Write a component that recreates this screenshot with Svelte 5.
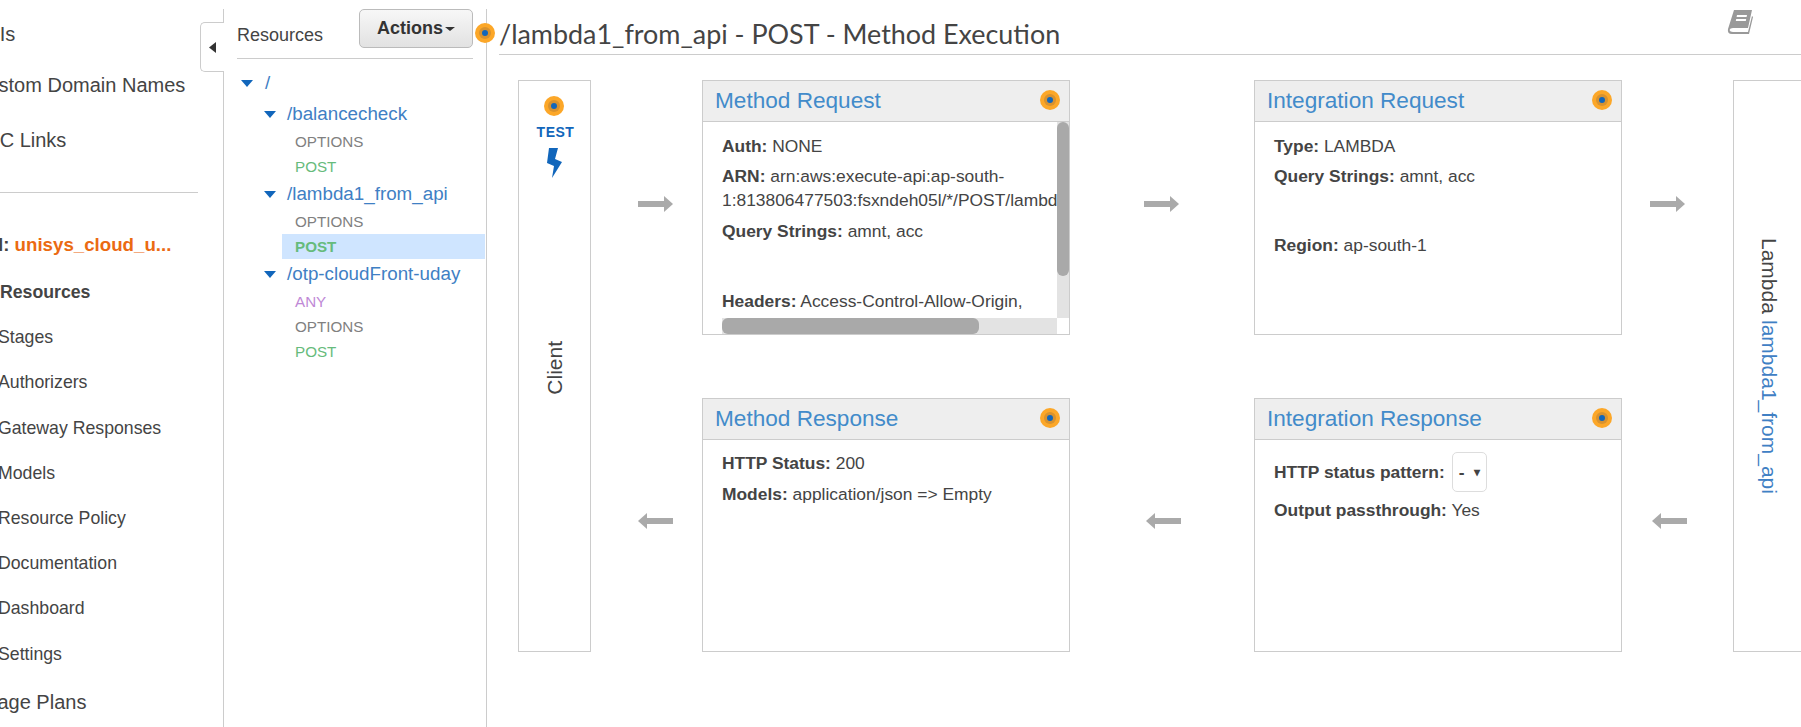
<script>
	const topNav = ['APIs', 'Custom Domain Names', 'VPC Links'];
	const apiNav = ['Resources', 'Stages', 'Authorizers', 'Gateway Responses', 'Models', 'Resource Policy', 'Documentation', 'Dashboard', 'Settings'];

	const tree = [
		{ path: '/balancecheck', methods: [{ name: 'OPTIONS', kind: 'options' }, { name: 'POST', kind: 'post' }] },
		{ path: '/lambda1_from_api', methods: [{ name: 'OPTIONS', kind: 'options' }, { name: 'POST', kind: 'post', selected: true }] },
		{ path: '/otp-cloudFront-uday', methods: [{ name: 'ANY', kind: 'any' }, { name: 'OPTIONS', kind: 'options' }, { name: 'POST', kind: 'post' }] }
	];
</script>

{#snippet dot(cls)}
	<svg class="dot {cls}" width="22" height="22" viewBox="0 0 22 22" aria-hidden="true">
		<circle cx="11" cy="11" r="10" fill="#fca728" />
		<circle cx="11" cy="11" r="6" fill="#d8922f" />
		<circle cx="11" cy="11" r="3" fill="#1166bb" />
	</svg>
{/snippet}

{#snippet arrow(cls, left)}
	<svg class="arrow {cls}" class:left width="35" height="16" viewBox="0 0 35 16" aria-hidden="true">
		<polygon points="0,5 26,5 26,0 35,8 26,16 26,11 0,11" fill="#aaa" />
	</svg>
{/snippet}

{#snippet caret()}
	<svg class="caret" width="12" height="7" viewBox="0 0 12 7" aria-hidden="true">
		<polygon points="0,0 12,0 6,7" fill="#1166bb" />
	</svg>
{/snippet}

<div class="page">
	<aside class="sidebar">
		<nav>
			{#each topNav as item}
				<div class="top-item">{item}</div>
			{/each}
			<hr />
			<div class="api-name">API: <span>unisys_cloud_u...</span></div>
			{#each apiNav as item, i}
				<div class="sub-item" class:active={i === 0}>{item}</div>
			{/each}
			<div class="top-item usage">Usage Plans</div>
		</nav>
		<div class="collapse">
			<svg width="7" height="11" viewBox="0 0 7 11" aria-hidden="true"><polygon points="7,0 7,11 0,5.5" fill="#333" /></svg>
		</div>
	</aside>

	<section class="resources">
		<header class="res-head">
			<span>Resources</span>
			<button>Actions<i class="btn-caret"></i></button>
		</header>
		<ul class="tree">
			<li class="row root">{@render caret()}<a href="#/">/</a></li>
			{#each tree as node}
				<li class="row parent">{@render caret()}<a href="#/">{node.path}</a></li>
				{#each node.methods as m}
					<li class="method {m.kind}" class:selected={m.selected}>{m.name}</li>
				{/each}
			{/each}
		</ul>
		{@render dot('res-dot')}
	</section>

	<main class="main">
		<header class="title">
			<h1>/lambda1_from_api - POST - Method Execution</h1>
			<svg class="book" width="27" height="26" viewBox="0 0 27 26" aria-hidden="true">
				<path d="M7 1 H25 L21 19 H6 Q3 19 2.5 21 Q3 23 6 23 H21 L25 7 L26 8 L22 25 H5 Q0 25 1 20 Z" fill="#999" />
				<path d="M10 6 H20 L19.6 8 H9.6 Z M9.2 10 H19.2 L18.8 12 H8.8 Z" fill="#fff" />
			</svg>
		</header>

		<div class="flow">
			<div class="client">
				{@render dot('test-dot')}
				<div class="test">TEST</div>
				<svg class="bolt" width="16" height="30" viewBox="0 0 16 30" aria-hidden="true">
					<polygon points="3,0 12,0 9,11 16,14 6,30 8,18 1,15" fill="#1166bb" />
				</svg>
				<div class="client-label">Client</div>
			</div>

			{@render arrow('a1')}

			<article class="card c1">
				<h2>Method Request {@render dot('card-dot')}</h2>
				<div class="scroller">
					<div class="viewport">
						<p><b>Auth:</b> NONE</p>
						<p class="arn"><b>ARN:</b> arn:aws:execute-api:ap-south-<br />1:813806477503:fsxndeh05l/*/POST/lambda1_from_api</p>
						<p><b>Query Strings:</b> amnt, acc</p>
						<p class="gap2"><b>Headers:</b> Access-Control-Allow-Origin,</p>
					</div>
					<div class="track v"><div class="thumb v"></div></div>
					<div class="track h"><div class="thumb h"></div></div>
				</div>
			</article>

			{@render arrow('a2')}

			<article class="card c2">
				<h2>Integration Request {@render dot('card-dot')}</h2>
				<div class="body">
					<p><b>Type:</b> LAMBDA</p>
					<p><b>Query Strings:</b> amnt, acc</p>
					<p class="gap"><b>Region:</b> ap-south-1</p>
				</div>
			</article>

			{@render arrow('a3')}

			<div class="lambda">Lambda <a href="#/">lambda1_from_api</a></div>

			{@render arrow('b1', true)}

			<article class="card c3">
				<h2>Method Response {@render dot('card-dot')}</h2>
				<div class="body">
					<p class="resp"><b>HTTP Status:</b> 200</p>
					<p><b>Models:</b> application/json =&gt; Empty</p>
				</div>
			</article>

			{@render arrow('b2', true)}

			<article class="card c4">
				<h2>Integration Response {@render dot('card-dot')}</h2>
				<div class="body">
					<p class="status"><b>HTTP status pattern:</b> <span class="select">-<i>▾</i></span></p>
					<p><b>Output passthrough:</b> Yes</p>
				</div>
			</article>

			{@render arrow('b3', true)}
		</div>
	</main>
</div>

<style>
	:global(body) {
		margin: 0;
		background: #fff;
		overflow: hidden;
	}

	.page {
		display: flex;
		height: 727px;
		font-family: 'Liberation Sans', Arial, sans-serif;
		color: #444;
		overflow: hidden;
	}

	/* left nav, scrolled a little past its left edge */
	.sidebar {
		position: relative;
		flex: 0 0 223px;
		margin-top: 9px;
		border-right: 1px solid #ccc;
	}

	nav {
		height: 100%;
		overflow: hidden;
		padding-top: 10px;
		box-sizing: border-box;
	}

	.top-item {
		font-size: 20px;
		line-height: 30px;
		margin-left: -27px;
		white-space: nowrap;
	}

	.top-item:nth-child(1) {
		margin-bottom: 21px;
	}

	.top-item:nth-child(2) {
		margin-bottom: 25px;
	}

	hr {
		border: 0;
		border-top: 1px solid #ccc;
		margin: 37px 25px 0 0;
	}

	.api-name {
		font-size: 18.7px;
		font-weight: bold;
		line-height: 30px;
		margin: 37px 0 10px -28px;
		white-space: nowrap;
	}

	.api-name span {
		color: #eb6a12;
	}

	.sub-item {
		font-size: 17.7px;
		line-height: 45.2px;
		margin-left: -2px;
		white-space: nowrap;
	}

	.sub-item.active {
		font-weight: bold;
		margin-left: 0;
	}

	.usage {
		margin-top: 10px;
	}

	.collapse {
		position: absolute;
		top: 13px;
		right: -1px;
		width: 24px;
		height: 50px;
		box-sizing: border-box;
		background: #fff;
		border: 1px solid #ccc;
		border-right: 0;
		border-radius: 5px 0 0 5px;
		display: flex;
		align-items: center;
		justify-content: center;
	}

	/* resource tree */
	.resources {
		position: relative;
		flex: 0 0 263px;
		box-sizing: border-box;
		margin-top: 9px;
		padding-left: 13px;
		border-right: 1px solid #ccc;
	}

	.res-head {
		display: flex;
		align-items: flex-start;
		justify-content: space-between;
		width: 236px;
		height: 50px;
		box-sizing: border-box;
		border-bottom: 1px solid #ccc;
		font-size: 18px;
	}

	.res-head span {
		margin-top: 15px;
		line-height: 22px;
	}

	button {
		width: 114px;
		height: 39px;
		padding: 0;
		font: bold 18px 'Liberation Sans', Arial, sans-serif;
		color: #333;
		background: linear-gradient(#f7f7f7, #e2e2e2);
		border: 1px solid #bbb;
		border-radius: 5px;
	}

	.btn-caret {
		display: inline-block;
		margin-left: 2px;
		vertical-align: 3px;
		border-top: 4px solid #333;
		border-left: 5px solid transparent;
		border-right: 5px solid transparent;
	}

	.tree {
		list-style: none;
		margin: 0;
		padding: 0;
		width: 248px;
	}

	.row {
		display: flex;
		align-items: center;
		height: 30px;
		font-size: 18.8px;
	}

	.row a {
		color: #3f80c4;
		text-decoration: none;
		white-space: nowrap;
	}

	.root {
		padding-left: 4px;
		height: 28px;
		margin-top: 10px;
		margin-bottom: 2px;
	}

	.root .caret {
		margin-right: 12px;
	}

	.parent {
		padding-left: 27px;
	}

	.parent .caret {
		margin-right: 11px;
	}

	.method {
		height: 25px;
		line-height: 25px;
		font-size: 15.2px;
		margin-left: 45px;
		padding-left: 13px;
	}

	.options {
		color: #808080;
	}

	.post {
		color: #66bb7c;
	}

	.any {
		color: #c088d6;
	}

	.selected {
		background: #cfe5ff;
		font-weight: bold;
	}

	.res-dot {
		position: absolute;
		top: 13px;
		right: -10px;
		z-index: 1;
	}

	/* main area */
	.main {
		flex: 1;
		min-width: 0;
	}

	.title {
		position: relative;
		margin-left: 12px;
		height: 54px;
		border-bottom: 1px solid #ccc;
	}

	h1 {
		margin: 0;
		padding-top: 16px;
		font: 400 26.9px/36px Lato, 'Liberation Sans', sans-serif;
		color: #444;
		white-space: nowrap;
	}

	.book {
		position: absolute;
		top: 9px;
		right: 47px;
	}

	.flow {
		display: grid;
		grid-template-columns: 73px 111px 368px 184px 368px 111px 120px;
		grid-template-rows: 255px 63px 254px;
		margin: 25px 0 0 31px;
	}

	.client {
		grid-column: 1;
		grid-row: 1 / 4;
		display: flex;
		flex-direction: column;
		align-items: center;
		border: 1px solid #ccc;
		padding-top: 14px;
	}

	.test-dot,
	.bolt {
		margin-right: 2px;
	}

	.test {
		margin: 7px 0 0 2px;
		font-size: 14px;
		line-height: 16px;
		font-weight: bold;
		color: #1166bb;
		letter-spacing: 0.5px;
	}

	.bolt {
		margin-top: 8px;
	}

	.client-label {
		margin-top: 163px;
		writing-mode: vertical-rl;
		transform: rotate(180deg);
		font-size: 21px;
		line-height: 24px;
	}

	.lambda {
		grid-column: 7;
		grid-row: 1 / 4;
		border: 1px solid #ccc;
		border-right: 0;
		display: flex;
		align-items: center;
		justify-content: center;
		padding-right: 50px;
		writing-mode: vertical-rl;
		font-size: 21px;
		line-height: 24px;
		white-space: pre;
	}

	.lambda a {
		color: #3f80c4;
		text-decoration: none;
	}

	.arrow {
		align-self: center;
	}

	.a1 { grid-column: 2; grid-row: 1; margin: 0 0 7px 47px; }
	.a2 { grid-column: 4; grid-row: 1; margin: 0 0 7px 74px; }
	.a3 { grid-column: 6; grid-row: 1; margin: 0 0 7px 28px; }
	.b1 { grid-column: 2; grid-row: 3; margin: 0 0 8px 47px; }
	.b2 { grid-column: 4; grid-row: 3; margin: 0 0 8px 76px; }
	.b3 { grid-column: 6; grid-row: 3; margin: 0 0 8px 30px; }

	.arrow.left {
		transform: scaleX(-1);
	}

	.card {
		display: flex;
		flex-direction: column;
		border: 1px solid #ccc;
		min-height: 0;
		overflow: hidden;
	}

	.c1 { grid-column: 3; grid-row: 1; }
	.c2 { grid-column: 5; grid-row: 1; }
	.c3 { grid-column: 3; grid-row: 3; }
	.c4 { grid-column: 5; grid-row: 3; }

	h2 {
		position: relative;
		flex: none;
		height: 41px;
		margin: 0;
		padding-left: 12px;
		box-sizing: border-box;
		background: #eee;
		border-bottom: 1px solid #ccc;
		font: 400 22.6px/40px 'Liberation Sans', Arial, sans-serif;
		color: #428bca;
	}

	.card-dot {
		position: absolute;
		top: 8px;
		right: 8px;
	}

	.body {
		padding: 14px 19px;
	}

	p {
		margin: 0 0 9px;
		font-size: 17.4px;
		line-height: 21px;
		white-space: nowrap;
	}

	.gap {
		margin-top: 48px;
	}

	.gap2 {
		margin-top: 49px;
	}

	.resp {
		margin-top: -1px;
		margin-bottom: 10px;
	}

	/* these scrollbars are drawn, the page shot hides native ones */
	.scroller {
		flex: 1;
		min-height: 0;
		margin-left: 19px;
		display: grid;
		grid-template-columns: 1fr 12px;
		grid-template-rows: 1fr 16px;
	}

	.viewport {
		overflow: hidden;
		padding-top: 14px;
		min-width: 0;
		min-height: 0;
	}

	.track {
		background: #e3e3e3;
	}

	.track.h {
		grid-column: 1;
		grid-row: 2;
	}

	.thumb {
		background: #a9a9a9;
		border-radius: 6px;
	}

	.thumb.v {
		height: 78.6%;
	}

	.thumb.h {
		width: 76.8%;
		height: 100%;
	}

	.arn {
		line-height: 24px;
		margin-top: -2px;
	}

	.status {
		display: flex;
		align-items: center;
		gap: 7px;
		height: 40px;
		margin: -2px 0 8px;
	}

	.select {
		display: flex;
		align-items: center;
		justify-content: space-between;
		box-sizing: border-box;
		width: 35px;
		height: 40px;
		padding: 0 6px;
		border: 1px solid #ddd;
		border-radius: 5px;
		font-weight: bold;
	}

	.select i {
		font-style: normal;
		font-size: 12px;
	}
</style>
